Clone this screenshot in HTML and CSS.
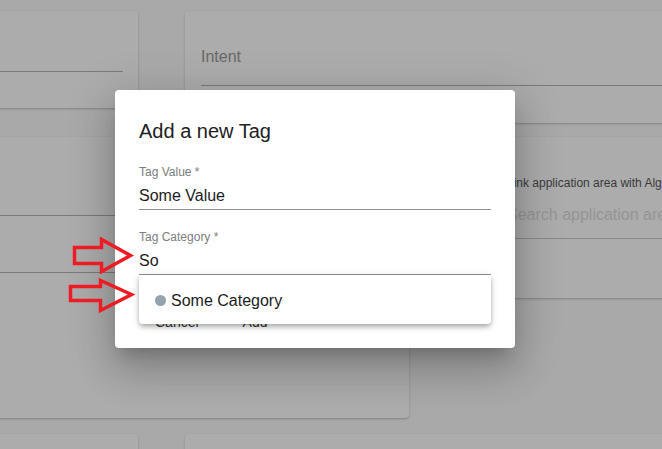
FILE: index.html
```html
<!DOCTYPE html>
<html lang="en">
<head>
<meta charset="utf-8">
<title>Add a new Tag</title>
<link rel="stylesheet" href="styles.css">
</head>
<body>
<div class="page">
  <div class="row row-top">
    <div class="card card-a"><div class="bg-line line-a"></div></div>
    <div class="card card-b">
      <div class="bg-label">Intent</div>
      <div class="bg-line line-b"></div>
    </div>
  </div>
  <div class="row row-mid">
    <div class="card card-c">
      <div class="bg-line line-c1"></div>
      <div class="bg-line line-c2"></div>
    </div>
    <div class="card card-d">
      <div class="bg-hint">Link application area with Algolia</div>
      <div class="bg-placeholder">Search application area</div>
      <div class="bg-line line-d"></div>
    </div>
  </div>
  <div class="row row-bottom">
    <div class="card card-e"></div>
    <div class="card card-f"></div>
  </div>
</div>

<div class="dialog" role="dialog" aria-labelledby="dlg-title">
  <h2 class="dialog-title" id="dlg-title">Add a new Tag</h2>
  <div class="field field-first">
    <div class="field-label">Tag Value *</div>
    <div class="field-input">Some Value</div>
  </div>
  <div class="field field-second">
    <div class="field-label">Tag Category *</div>
    <div class="field-input">So</div>
    <div class="popper">
      <div class="option"><span class="dot"></span><span>Some Category</span></div>
    </div>
  </div>
  <div class="actions">
    <button class="btn">Cancel</button>
    <button class="btn">Add</button>
  </div>
</div>

<svg class="arrows" width="662" height="449" viewBox="0 0 662 449" aria-hidden="true">
  <polygon points="74.5,247.5 101.5,247.5 101.5,239.5 130.5,255.5 101.5,271.5 101.5,263.5 74.5,263.5" />
  <polygon points="70.5,286.5 100.5,286.5 100.5,280.5 131.5,294.5 100.5,310.5 100.5,300.5 70.5,300.5" />
</svg>
</body>
</html>
```

FILE: styles.css
```css
html, body {
  margin: 0;
  padding: 0;
}

body {
  width: 662px;
  height: 449px;
  overflow: hidden;
  position: relative;
  background: #a9a9a9;
  font-family: "Liberation Sans", Arial, Helvetica, sans-serif;
}

/* ---------- dimmed background page ---------- */
.page {
  width: 702px;
  margin-left: -20px;
  padding-top: 11px;
}

.row {
  display: grid;
  align-items: start;
}

.row-top {
  grid-template-columns: 158px 497px;
  column-gap: 47px;
}

.row-mid {
  margin-top: 14px;
  grid-template-columns: 429px 191px;
  column-gap: 82px;
}

.row-bottom {
  margin-top: 16px;
  grid-template-columns: 158px 497px;
  column-gap: 47px;
}

.card {
  background: #acacac;
  border-radius: 4px;
  box-shadow: 0 1px 3px rgba(0, 0, 0, 0.16), 0 1px 1px rgba(0, 0, 0, 0.08);
  box-sizing: border-box;
  overflow: hidden;
}

.card-a {
  height: 97px;
  padding: 60px 15px 0 20px;
}

.card-b {
  height: 112px;
  padding: 36px 0 0 16px;
}

.card-c {
  height: 281px;
  padding: 78px 16px 0 20px;
}

.card-d {
  height: 161px;
  padding: 39px 0 0 16px;
}

.card-e,
.card-f {
  height: 60px;
}

.bg-line {
  height: 1px;
  background: #7a7a7a;
}

.line-b {
  margin-top: 19px;
}

.line-c2 {
  margin-top: 56px;
}

.line-d {
  margin-top: 14px;
  background: #8a8a8a;
}

.bg-label {
  font-size: 16px;
  line-height: 19px;
  color: #686868;
}

.bg-hint {
  font-size: 12px;
  line-height: 14px;
  color: #3a3a3a;
  white-space: nowrap;
}

.bg-placeholder {
  margin-top: 15px;
  font-size: 16px;
  line-height: 19px;
  color: #959595;
  white-space: nowrap;
}

/* ---------- dialog ---------- */
.dialog {
  position: absolute;
  left: 115px;
  top: 90px;
  width: 400px;
  height: 258px;
  box-sizing: border-box;
  padding: 25px 24px 0;
  background: #fff;
  border-radius: 4px;
  box-shadow: 0 11px 15px -7px rgba(0, 0, 0, 0.2),
              0 24px 38px 3px rgba(0, 0, 0, 0.14),
              0 9px 46px 8px rgba(0, 0, 0, 0.12);
}

.dialog-title {
  margin: 0;
  font-size: 20px;
  line-height: 32px;
  font-weight: 400;
  color: #212121;
}

.field {
  position: relative;
  width: 352px;
}

.field-first {
  margin-top: 18px;
}

.field-second {
  margin-top: 20px;
}

.field-label {
  font-size: 12px;
  line-height: 14px;
  color: #7d7d7d;
}

.field-input {
  padding: 7px 0 4px;
  font-size: 16px;
  line-height: 19px;
  color: #1c1c1c;
  border-bottom: 1px solid #8f8f8f;
}

.popper {
  position: absolute;
  top: 100%;
  left: 0;
  right: 0;
  z-index: 2;
  background: #fff;
  border-radius: 0 0 4px 4px;
  box-shadow: 0 2px 4px -1px rgba(0, 0, 0, 0.2),
              0 4px 5px 0 rgba(0, 0, 0, 0.14),
              0 1px 10px 0 rgba(0, 0, 0, 0.12);
}

.option {
  display: flex;
  align-items: center;
  gap: 5px;
  height: 47px;
  padding: 2px 0 0 16px;
  font-size: 16px;
  color: #1c1c1c;
}

.dot {
  width: 11px;
  height: 11px;
  border-radius: 50%;
  background: #93a4ae;
}

.actions {
  display: flex;
  gap: 12px;
  margin-top: 29px;
}

.btn {
  border: 0;
  background: transparent;
  padding: 6px 16px;
  font-family: inherit;
  font-size: 14px;
  line-height: 24.5px;
  color: #333;
}

/* ---------- annotation arrows ---------- */
.arrows {
  position: absolute;
  left: 0;
  top: 0;
  pointer-events: none;
  z-index: 5;
}

.arrows polygon {
  fill: none;
  stroke: #ed1c24;
  stroke-width: 3.5;
  stroke-linejoin: miter;
}
```
